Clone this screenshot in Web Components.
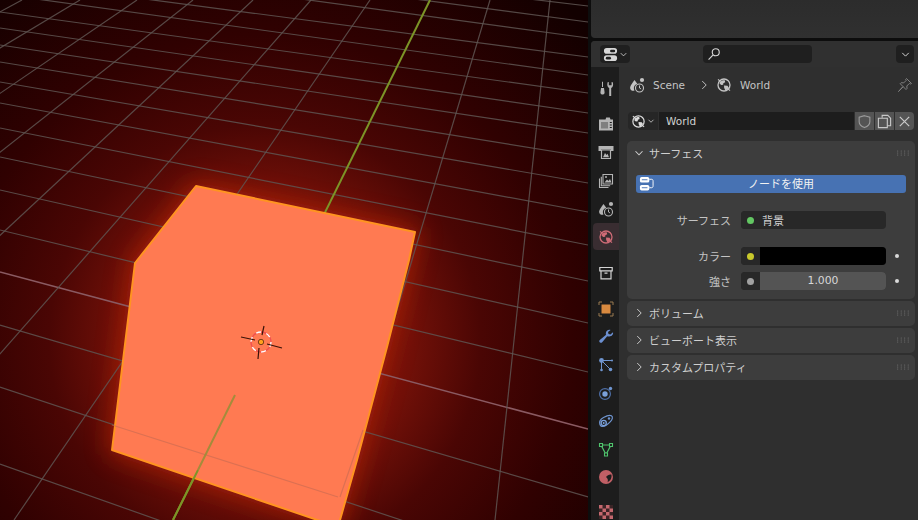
<!DOCTYPE html>
<html lang="ja"><head><meta charset="utf-8"><title>Blender World</title>
<style>
html,body{margin:0;padding:0;background:#0d0d0d;overflow:hidden}
body{width:918px;height:520px;font:10.5px "DejaVu Sans","Noto Sans CJK JP",sans-serif;color:#c4c4c4}
</style></head><body>
<bl-app>
  <bl-viewport slot="view"></bl-viewport>
  <bl-topstrip slot="strip"></bl-topstrip>
  <bl-props slot="props">
    <bl-section title="サーフェス" open>
      <bl-button><bl-icon name="nodes" slot="icon"></bl-icon>ノードを使用</bl-button>
      <bl-row label="サーフェス" style="margin-top:18px"><bl-field socket="#63c763" text="背景" kind="menu"></bl-field></bl-row>
      <bl-row label="カラー" style="margin-top:18px" dot><bl-field socket="#c9c92c" kind="color"></bl-field></bl-row>
      <bl-row label="強さ" style="margin-top:7px" dot><bl-field socket="#a1a1a1" text="1.000" kind="num"></bl-field></bl-row>
    </bl-section>
    <bl-section title="ボリューム"></bl-section>
    <bl-section title="ビューポート表示"></bl-section>
    <bl-section title="カスタムプロパティ"></bl-section>
  </bl-props>
</bl-app>
<script>
const ICONS={
 tool:'<path d="M4 .8h1v5.200H4zM3 7h3l.6 4.500c0 2.800-4.200 2.800-4.200 0z" fill="currentColor"/><path d="M9.600 1.200c-.8 3 0 4.800 1.600 5.800v8h2V7c1.600-1 2.400-2.800 1.600-5.800l-1.200-.2v3.200h-2.800V1z" fill="currentColor"/>',
 render:'<path d="M3 3.500h4.500l.7-2h3.600l.7 2H15v11H1v-11z" fill="currentColor"/><path d="M3 6h7v6.500H3z" fill="#1d1d1d" opacity=".35"/><path d="M11.800 6.500h2M11.800 9h2M11.800 11.500h2" stroke="#1d1d1d" stroke-width="1.100"/>',
 output:'<path d="M.5 2h15v5H13V5.500H3V7H.5z" fill="currentColor"/><path d="M3.500 6h9v8.500h-9z" fill="none" stroke="currentColor" stroke-width="1.200"/><path d="M5 13.200l2-4.200 1.500 2 1-1.200 1.500 3.400z" fill="currentColor"/>',
 layer:'<path d="M5 1.500h9.500V11H5z" fill="none" stroke="currentColor" stroke-width="1.100"/><path d="M6.500 9.500l2.500-3 1.500 1.500 1.500-2 1.500 3.500z" fill="currentColor"/><circle cx="8" cy="4" r="1" fill="currentColor"/><path d="M3.300 3.800v8.900h8.900M1.500 5.500v9h9" fill="none" stroke="currentColor" stroke-width="1.100"/>',
 scene:'<path d="M5.500 3C3 6.800.8 9 1.200 11.500c.4 2.200 2.800 2.800 4.300 2-1.500-3 0-6 2.800-6.800z" fill="currentColor"/><circle cx="13" cy="3" r="2.100" fill="currentColor"/><circle cx="10.500" cy="11" r="4" fill="none" stroke="currentColor" stroke-width="1.100"/><path d="M10.500 8.500V11l1.600 1" fill="none" stroke="currentColor" stroke-width="1"/>',
 world:'<circle cx="8" cy="8" r="6" fill="none" stroke="currentColor" stroke-width="1.300"/><path d="M4 4.800c1.500-1.300 3-1.800 4.800-1.600l.4 2-1.900 1-.1 1.500-2 .4-1.700-1.500zM8 8.500l3.500.2 1.200 1.800c-.7 1.500-2 2.600-3.200 3l-1.300-2.500z" fill="currentColor"/><path d="M2 2.300l2.500 2.200M11.500 11.500l2.500 2.200" stroke="currentColor" stroke-width="1.100"/>',
 box:'<path d="M1.800 2.500h12.400v3.300H1.800zM3 5.800v8h10v-8M6.500 8.200h3" fill="none" stroke="currentColor" stroke-width="1.200"/>',
 object:'<path d="M3.500 3.500h9v9h-9z" fill="#d8893f"/><path d="M1 4V1h3M12 1h3v3M15 12v3h-3M4 15H1v-3" fill="none" stroke="#9a7a50" stroke-width="1"/>',
 modifier:'<path d="M15 3.200l-2.600 2.300-1.900-.5-.5-1.900L12.600 1C10.400.3 8 1.600 7.800 4.200c0 .7.1 1.200.3 1.600L1.800 11c-1.600 1.500.8 3.900 2.400 2.300l5-6c.6.2 1.300.3 2 .2 2.700-.3 4.400-2.100 3.800-4.300z" fill="#6b8fd1"/>',
 particles:'<circle cx="3.500" cy="3.500" r="2.400" fill="#6f95d0"/><circle cx="3.500" cy="13" r="1.300" fill="#6f95d0"/><circle cx="12.500" cy="12.500" r="1.800" fill="#6f95d0"/><circle cx="14" cy="3.500" r="1" fill="#6f95d0"/><path d="M3.500 4v9M4 4l8.500 8.500M4 3.500h10" stroke="#6f95d0" stroke-width="1" fill="none"/>',
 physics:'<circle cx="7" cy="9" r="5.400" fill="none" stroke="#4e6fa8" stroke-width="1.200"/><circle cx="7" cy="9" r="2.700" fill="#7aa0da"/><circle cx="12.500" cy="3.500" r="1.700" fill="#6f95d0"/>',
 constraint:'<path d="M1.800 11c-.8-2.800 1.200-5 3.700-6.400 2.700-1.500 6-3 7.900-1.800 1.800 1.200 1 3.700-1 5.800-2 2.100-4.800 4.800-7.500 4.900-1.500 0-2.700-1-3.100-2.500z" fill="none" stroke="#6f95d0" stroke-width="1.200"/><circle cx="5.700" cy="10" r="2.600" fill="none" stroke="#7aa0da" stroke-width="1.300"/><circle cx="5.700" cy="10" r="1" fill="#7aa0da"/><circle cx="11" cy="5.500" r="1.200" fill="#6f95d0"/>',
 data:'<path d="M3 4h10L8 13.500z" fill="none" stroke="#4fc36d" stroke-width="1.200"/><path d="M1.500 2.500h3v3h-3zM11.500 2.500h3v3h-3zM6.500 12h3v3h-3z" fill="#1d1d1d" stroke="#4fc36d" stroke-width="1.100"/>',
 material:'<circle cx="8" cy="8" r="7" fill="#c05f65"/><path d="M8 8C9.500 6.500 11 5.200 13.300 5.600 14.200 8.500 12.600 12 9.500 13.300 10.300 11.500 10 9.500 8 8z" fill="#1d1d1d"/>',
 texture:'<path d="M1 1h14v14H1z" fill="#3a2426"/><path d="M1 1h3.500v3.500H1zM8 1h3.500v3.500H8zM4.500 4.500H8V8H4.500zM11.500 4.500H15V8h-3.500zM1 8h3.500v3.500H1zM8 8h3.500v3.500H8zM4.500 11.500H8V15H4.500zM11.500 11.500H15V15h-3.500z" fill="#c4686e"/>',
 toggle:'<rect x="1" y="1" width="14" height="6.300" rx="3" fill="currentColor"/><rect x="1" y="8.700" width="14" height="6.300" rx="3" fill="currentColor"/><rect x="7.500" y="2.800" width="5.500" height="2.800" rx="1.400" fill="#1f1f1f"/><rect x="3" y="10.500" width="5.500" height="2.800" rx="1.400" fill="#1f1f1f"/>',
 search:'<circle cx="10" cy="6" r="4" fill="none" stroke="currentColor" stroke-width="1.300"/><path d="M7 9L1.800 14.500" stroke="currentColor" stroke-width="1.300"/>',
 chevd:'<path d="M4 6l4 4 4-4" fill="none" stroke="currentColor" stroke-width="1.200"/>',
 chevr:'<path d="M6 3.500l4.500 4.500L6 12.500" fill="none" stroke="currentColor" stroke-width="1.100"/>',
 pin:'<path d="M9.500 1.500l5 5-1.200.5-1-.5-2.500 2.500.2 2.500-1 1-2.800-2.800L1.500 14.500 6 9.500 3.200 6.700l1-1 2.500.2L9.200 3.400l-.5-1z" fill="none" stroke="currentColor" stroke-width="1"/>',
 shield:'<path d="M8 1.800l5.700 1.700v4.700c0 3-3 5.200-5.700 6.300-2.700-1.100-5.700-3.300-5.700-6.300V3.500z" fill="none" stroke="currentColor" stroke-width="1.200"/>',
 copy:'<path d="M5.500 4V1.500h6l3 3v8H11" fill="none" stroke="currentColor" stroke-width="1.200"/><path d="M1.500 4.500h9.500v10H1.500z" fill="none" stroke="currentColor" stroke-width="1.200"/>',
 x:'<path d="M3 3l10 10M13 3L3 13" stroke="currentColor" stroke-width="1.300"/>',
 nodes:'<rect x="1" y="1" width="10" height="6" rx="1.800" fill="#fff"/><rect x="1" y="9.500" width="10" height="6" rx="1.800" fill="#fff"/><path d="M3 4h6M3 12.500h6" stroke="#4772b3"/><path d="M11 3.500h2.500c1.200 0 1.500 1 1.500 2v5c0 1-.3 2-1.500 2H11" fill="none" stroke="#fff" stroke-width="1"/>',
 grip:'<g fill="#7c7c7c" transform="translate(0 5.500)"><circle cx=".7" cy=".4" r=".5"/><circle cx="4.200" cy=".4" r=".5"/><circle cx="7.700" cy=".4" r=".5"/><circle cx="11.200" cy=".4" r=".5"/><circle cx=".7" cy="2.500" r=".5"/><circle cx="4.200" cy="2.500" r=".5"/><circle cx="7.700" cy="2.500" r=".5"/><circle cx="11.200" cy="2.500" r=".5"/><circle cx=".7" cy="4.600" r=".5"/><circle cx="4.200" cy="4.600" r=".5"/><circle cx="7.700" cy="4.600" r=".5"/><circle cx="11.200" cy="4.600" r=".5"/></g>'
};
function def(name,css,html){
  customElements.define(name,class extends HTMLElement{
    constructor(){super();const r=this.attachShadow({mode:'open'});r.innerHTML='<style>'+css+'</style>'+(typeof html==='function'?'':html);}
    connectedCallback(){if(typeof html==='function'){const st=this.shadowRoot.querySelector('style');this.shadowRoot.innerHTML='';this.shadowRoot.append(st);const t=document.createElement('template');t.innerHTML=html(this);this.shadowRoot.append(t.content);}}
  });
}
def('bl-icon',':host{display:inline-flex;width:var(--s,16px);height:var(--s,16px);flex:none}svg{width:100%;height:100%;display:block}',
 h=>`<svg viewBox="0 0 16 16" aria-hidden="true">${ICONS[h.getAttribute('name')]}</svg>`);

def('bl-app',':host{display:flex;width:918px;height:520px;background:#0d0d0d}.r{display:flex;flex-direction:column;gap:3px;width:327px;margin-left:3px}',
 '<slot name="view"></slot><div class="r"><slot name="strip"></slot><slot name="props"></slot></div>');

const depth=[[22,-946],[80,-786],[137,-626],[193,-466],[253,-306],[311,-146],[370,14],[490,334],[550,495]];
const cross=[[-64,6],[-56,22],[-42,38],[-20,57],[-6,75],[12,93],[28,113],[45,133],[62,157],[82,183],[103,212],[128,245],[157,281],[190,323],[230,372],[272,429],[325,497],[387,582],[464,672]];
const line=(a,b,c,d,col,w,op)=>`<line x1="${a}" y1="${b}" x2="${c}" y2="${d}" stroke="${col}" stroke-width="${w}" opacity="${op}"/>`;
let gridSvg='';
cross.forEach(l=>{const pink=l[0]===272;gridSvg+=line(0,l[0],588,l[1],pink?'#8a5a62':'#5f5552',pink?1.500:1.200,pink?1:.85)});
depth.forEach(l=>{gridSvg+=line(l[0],0,l[1],520,'#5f5552',1.200,.85)});
const PLANE="196,186 415,232 409,260 387,347 357,460 338,527 112,450 135,263";
def('bl-viewport',':host{display:block;width:588px;height:520px;flex:none;overflow:hidden}svg{display:block}',
`<svg width="588" height="520" viewBox="0 0 588 520" role="img" aria-label="3D viewport">
<defs>
<radialGradient id="bg" gradientUnits="userSpaceOnUse" cx="265" cy="340" r="450">
<stop offset="0" stop-color="#a01a0a"/><stop offset=".33" stop-color="#701008"/><stop offset=".48" stop-color="#4a0604"/><stop offset=".68" stop-color="#300101"/><stop offset="1" stop-color="#120000"/>
</radialGradient>
<filter id="gl" x="-40%" y="-40%" width="180%" height="180%"><feGaussianBlur stdDeviation="12"/></filter>
</defs>
<rect width="588" height="520" fill="url(#bg)"/>
<polygon points="${PLANE}" fill="#c02610" stroke="#c02610" stroke-width="8" filter="url(#gl)" opacity=".65"/>
<g>${gridSvg}</g>
${line(430,0,173,520,'#7c9427',2,1)}
<polygon points="${PLANE}" fill="#ff7a52" stroke="#ff9420" stroke-width="2" stroke-linejoin="round"/>
${line(112,425,338,497,'#c56a52',1.200,.6)}
${line(363,430,340,497,'#c56a52',1.200,.6)}
${line(235,395,198,470,'#a08c3a',2,.95)}
${line(198,470,173,520,'#7c9427',2,1)}
<g fill="none">
<circle cx="261" cy="342" r="10" stroke="#f05050" stroke-width="1.300"/>
<circle cx="261" cy="342" r="10" stroke="#fff" stroke-width="1.400" stroke-dasharray="5 5.470"/>
<path d="M241 337l14 3M267 344l15 4M264 326l-2 9M259 348l-1 11" stroke="#3a1208" stroke-width="1.200"/>
</g>
<circle cx="261" cy="342" r="2.700" fill="#ffa01e" stroke="#5a2a10" stroke-width=".8"/>
</svg>`);

def('bl-topstrip',':host{display:block;height:38px;background:linear-gradient(#2c2c2c,#303030);border-radius:0 0 0 4px}','');

def('bl-props',`:host{display:grid;grid-template-columns:28px 1fr;grid-template-rows:26px 1fr;height:479px;background:#2f2f2f;border-radius:4px 0 0 0;overflow:hidden}
.hd{grid-column:1/3;display:flex;align-items:center;justify-content:space-between;padding:0 4px 0 9px;background:#303030;color:#d6d6d6}
.dd{display:flex;align-items:center;height:18px;background:#1f1f1f;border-radius:4px;box-sizing:border-box}
.t{width:30px;padding-left:3px;--s:15px}
.t bl-icon+bl-icon{--s:11px}
.s{width:109px;padding-left:4px;--s:14px}
.m{width:18px;justify-content:center;--s:13px}
.tabs{background:#1d1d1d;display:flex;flex-direction:column;align-items:stretch;padding-top:7px;color:#b4b4b4;overflow:hidden}
.tab{height:28px;display:flex;align-items:center;justify-content:center;margin-left:2px;flex:none;--s:16px}
.tab.a{background:#392d31;border-radius:4px 0 0 4px;height:27px}
.main{padding:5px 3px 0 8px;min-width:0;display:flex;flex-direction:column;gap:2px}
.bc{display:flex;align-items:center;height:26px;padding-left:2px;--s:16px}
.bc span{margin-left:8px}
.sel{display:flex;height:18px;margin:12px 1px 9px 1px;--s:15px;border-radius:4px;overflow:hidden}
.sel .a{width:30px;background:#262626;display:flex;align-items:center;padding-left:3px;box-sizing:border-box;margin-right:1px;color:#dcdcdc}
.sel .a bl-icon+bl-icon{--s:10px}
.sel .f{flex:1;background:#1d1d1d;padding-left:7px;line-height:18px;color:#d0d0d0}
.sel .b{width:19px;background:#545454;display:flex;align-items:center;justify-content:center;margin-left:1px;color:#c8c8c8}
.sel .b.sh{color:#9b9b9b}
`,
`<div class="hd"><div class="dd t"><bl-icon name="toggle"></bl-icon><bl-icon name="chevd"></bl-icon></div>
<div class="dd s" style="margin-left:73px"><bl-icon name="search"></bl-icon></div><div style="flex:1"></div><div class="dd m"><bl-icon name="chevd"></bl-icon></div></div>
<div class="tabs">
<div class="tab" style="height:29px"><bl-icon name="tool"></bl-icon></div>
<div class="tab" style="margin-top:7px"><bl-icon name="render"></bl-icon></div>
<div class="tab"><bl-icon name="output"></bl-icon></div>
<div class="tab" style="height:29px"><bl-icon name="layer"></bl-icon></div>
<div class="tab"><bl-icon name="scene"></bl-icon></div>
<div class="tab a" style="color:#cf6b76"><bl-icon name="world"></bl-icon></div>
<div class="tab" style="margin-top:9px;color:#d4d4d4"><bl-icon name="box"></bl-icon></div>
<div class="tab" style="margin-top:8px"><bl-icon name="object"></bl-icon></div>
<div class="tab"><bl-icon name="modifier"></bl-icon></div>
<div class="tab"><bl-icon name="particles"></bl-icon></div>
<div class="tab"><bl-icon name="physics"></bl-icon></div>
<div class="tab"><bl-icon name="constraint"></bl-icon></div>
<div class="tab"><bl-icon name="data"></bl-icon></div>
<div class="tab"><bl-icon name="material"></bl-icon></div>
<div class="tab" style="margin-top:7px"><bl-icon name="texture"></bl-icon></div>
</div>
<div class="main">
<div class="bc"><bl-icon name="scene"></bl-icon><span>Scene</span><bl-icon name="chevr" style="margin-left:12px;--s:14px"></bl-icon><bl-icon name="world" style="margin-left:5px"></bl-icon><span>World</span><bl-icon name="pin" style="margin-left:auto;margin-right:2px;color:#808080"></bl-icon></div>
<div class="sel"><div class="a"><bl-icon name="world"></bl-icon><bl-icon name="chevd"></bl-icon></div><div class="f">World</div><div class="b sh"><bl-icon name="shield"></bl-icon></div><div class="b"><bl-icon name="copy"></bl-icon></div><div class="b"><bl-icon name="x"></bl-icon></div></div>
<slot></slot>
</div>`);

def('bl-section',`:host{display:block;background:#3d3d3d;border-radius:5px;flex:none}
.h{display:flex;align-items:center;height:25px;box-sizing:border-box;padding:0 2px 2px 5px;color:#cfcfcf;font-size:11px}
.h bl-icon{--s:14px;margin-right:3px}
.h bl-icon.g{margin-left:auto;margin-right:0;--s:16px}
.b{padding:9px}`,
h=>`<div class="h"><bl-icon name="${h.hasAttribute('open')?'chevd':'chevr'}"></bl-icon><span>${h.getAttribute('title')}</span><bl-icon class="g" name="grip"></bl-icon></div>${h.hasAttribute('open')?'<div class="b"><slot></slot></div>':''}`);

def('bl-button',`:host{display:flex;align-items:center;height:18px;box-sizing:border-box;background:#4772b3;border-radius:3px;color:#f2f2f2;position:relative;justify-content:center;font-size:11px;padding:0 0 2px 20px}
::slotted([slot=icon]){position:absolute;left:3px;top:1px;--s:15px}`,'<slot name="icon"></slot><slot></slot>');

def('bl-row',`:host{display:grid;grid-template-columns:105px 145px 20px;column-gap:0;height:18px;align-items:center}
.l{text-align:right;padding-right:10px;color:#c4c4c4;font-size:11px}
.d{width:4px;height:4px;border-radius:50%;background:#dadada;justify-self:center;margin-left:1px}`,
h=>`<div class="l">${h.getAttribute('label')}</div><div style="grid-column:2"><slot></slot></div>${h.hasAttribute('dot')?'<div class="d"></div>':''}`);

def('bl-field',`:host{display:flex;height:18px;border-radius:4px;overflow:hidden;background:#282828;align-items:center;color:#d2d2d2}
.k{width:18px;height:18px;display:flex;align-items:center;justify-content:center;background:#282828;flex:none}
.k i{display:block;width:7px;height:7px;border-radius:50%}
.menu{padding-left:3px;font-size:11px}
.c{flex:1;height:18px;margin-left:1px;background:#000}
.n{flex:1;height:18px;margin-left:1px;background:#545454;text-align:center;line-height:18px;color:#d8d8d8;font-size:10.800px}`,
h=>{const k=h.getAttribute('kind'),t=h.getAttribute('text')||'';return `<div class="k"><i style="background:${h.getAttribute('socket')}"></i></div>`+(k==='menu'?`<span class="menu">${t}</span>`:k==='color'?'<div class="c"></div>':`<div class="n">${t}</div>`)});
</script>
</body></html>
